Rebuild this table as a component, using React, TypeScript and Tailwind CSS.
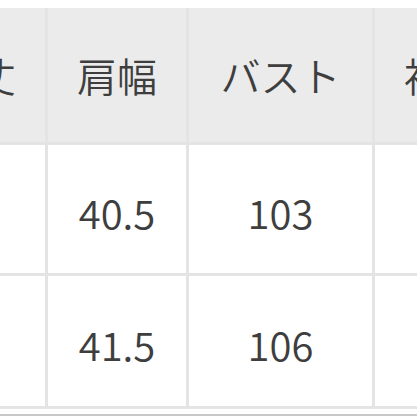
import React from "react";

const font = { fontFamily: '"Noto Sans CJK JP", "Noto Sans", sans-serif' };

export default function App() {
  const headers = ["着丈", "肩幅", "バスト", "袖丈"];
  const rows = [
    ["71", "40.5", "103", "60"],
    ["73", "41.5", "106", "61"],
  ];
  return (
    <div className="w-[417px] h-[417px] overflow-hidden bg-white" style={font}>
      <div className="pt-[8px] ml-[-96px] w-max">
        <div className="grid grid-cols-[138px_138px_183px_138px] gap-[3px] px-[3px] pb-[3px] bg-[#e4e4e4] text-[40px] font-[350] text-[#3e3e3e]">
          {headers.map((h) => (
            <div key={h} className="h-[134px] bg-[#ebebeb] flex items-center justify-center leading-none">
              {h}
            </div>
          ))}
          {rows.map((r, i) =>
            r.map((c, j) => (
              <div
                key={`${i}-${j}`}
                className={`${i === 0 ? "h-[128px]" : "h-[130px]"} bg-white flex items-center justify-center leading-none pt-[6px]`}
              >
                {c}
              </div>
            ))
          )}
        </div>
      </div>
      <div className="mt-[5px] h-[2px] bg-[#c8c8c8]" />
    </div>
  );
}
